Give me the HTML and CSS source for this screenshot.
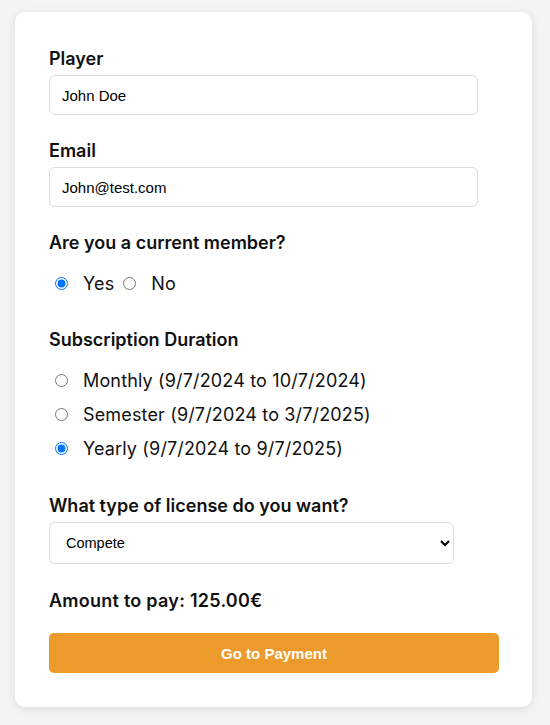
FILE: index.html
```html
<!DOCTYPE html>
<html lang="en">
<head>
<meta charset="utf-8">
<title>Subscription</title>
<link rel="stylesheet" href="styles.css">
</head>
<body>
<form class="card">
  <div class="group">
    <label class="label" for="player">Player</label>
    <input class="field" id="player" type="text" value="John Doe">
  </div>
  <div class="group">
    <label class="label" for="email">Email</label>
    <input class="field" id="email" type="email" value="John@test.com">
  </div>
  <div class="group radios-group">
    <div class="label">Are you a current member?</div>
    <div class="inline-radios">
      <label class="radio"><input type="radio" name="member" checked><span>Yes</span></label>
      <label class="radio"><input type="radio" name="member"><span>No</span></label>
    </div>
  </div>
  <div class="group radios-group radios-last">
    <div class="label">Subscription Duration</div>
    <div class="stack-radios">
      <label class="radio"><input type="radio" name="dur"><span>Monthly (9/7/2024 to 10/7/2024)</span></label>
      <label class="radio"><input type="radio" name="dur"><span>Semester (9/7/2024 to 3/7/2025)</span></label>
      <label class="radio"><input type="radio" name="dur" checked><span>Yearly (9/7/2024 to 9/7/2025)</span></label>
    </div>
  </div>
  <div class="group select-group">
    <label class="label" for="license">What type of license do you want?</label>
    <select class="select" id="license">
      <option>Compete</option>
      <option>Recreational</option>
    </select>
  </div>
  <div class="amount">Amount to pay: 125.00€</div>
  <button type="button" class="pay">Go to Payment</button>
</form>
</body>
</html>
```
FILE: styles.css
```css
* { box-sizing: border-box; }
html, body { margin: 0; padding: 0; }
body {
  background: #f4f4f4;
  font-family: "Inter", "Liberation Sans", sans-serif;
  color: #111;
  padding: 12px 18px 19px 15px;
}
.card {
  background: #fff;
  border-radius: 10px;
  box-shadow: 0 2px 10px rgba(0,0,0,0.10);
  padding: 35px 33px 34px 34px;
  display: flex;
  flex-direction: column;
}
.group { display: flex; flex-direction: column; margin-bottom: 24px; }
.group.first { margin-bottom: 25px; }
.radios-group { margin-bottom: 33px; }
.radios-group.radios-last { margin-bottom: 34px; }
.select-group { margin-bottom: 25px; }
.label {
  font-size: 18px;
  line-height: 24px;
  font-weight: 600;
  margin-bottom: 4px;
  color: #111;
}
.field {
  width: 429px;
  height: 40px;
  border: 1px solid #dcdcdc;
  border-radius: 6px;
  padding: 0 12px;
  font-family: "Liberation Sans", Arial, sans-serif;
  font-size: 15px;
  color: #000;
  background: #fff;
}
.select {
  width: 405px;
  height: 42px;
  border: 1px solid #dcdcdc;
  border-radius: 6px;
  padding: 0 12px;
  font-family: "Liberation Sans", Arial, sans-serif;
  font-size: 14.5px;
  color: #000;
  background: #fff;
}
.inline-radios { display: flex; margin-top: 12px; }
.stack-radios { display: flex; flex-direction: column; gap: 10px; margin-top: 12px; }
.radio {
  display: flex;
  align-items: center;
  height: 24px;
  font-size: 18px;
  font-weight: 400;
  letter-spacing: 0.15px;
}
.radio input {
  width: 13px;
  height: 13px;
  margin: 0 15px 0 6px;
}
.inline-radios .radio + .radio input { margin-left: 9px; }
.amount {
  font-size: 18px;
  line-height: 24px;
  font-weight: 600;
  letter-spacing: 0.25px;
  margin-bottom: 20px;
}
.pay {
  width: 450px;
  height: 40px;
  border: none;
  border-radius: 5px;
  background: #ec9a2c;
  color: #fff;
  font-family: "Liberation Sans", Arial, sans-serif;
  font-size: 15px;
  font-weight: 700;
}
```
